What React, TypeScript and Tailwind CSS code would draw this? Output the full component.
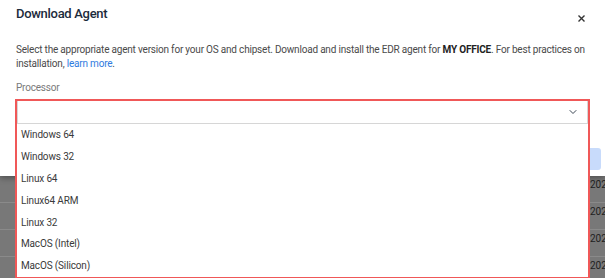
import { ChevronDown } from "lucide-react";

const options = [
  "Windows 64",
  "Windows 32",
  "Linux 64",
  "Linux64 ARM",
  "Linux 32",
  "MacOS (Intel)",
  "MacOS (Silicon)",
];

export default function App() {
  return (
    <div
      className="w-[605px] h-[278px] overflow-hidden bg-[#787878] flex flex-col"
      style={{ fontFamily: "Roboto, 'Liberation Sans', sans-serif" }}
    >
      {/* Modal */}
      <div className="relative z-10 h-[176px] shrink-0 bg-white shadow-[0_2px_6px_rgba(0,0,0,0.35)]">
        <div className="pl-4 pr-[15px]">
          {/* Header */}
          <div className="flex items-start justify-between pt-[6px]">
            <h2 className="text-[13px] leading-[16px] font-medium tracking-[-0.3px] text-[#1c2b3c]">
              Download Agent
            </h2>
            <button className="mt-[9px] mr-[5px] text-[#333]">
              <svg width="7" height="7" viewBox="0 0 7 7">
                <path d="M0.5 0.5 L6.5 6.5 M6.5 0.5 L0.5 6.5" stroke="currentColor" strokeWidth="1.4" />
              </svg>
            </button>
          </div>

          {/* Description */}
          <p className="mt-[21px] text-[10px] leading-[14px] text-[#4a4a4a] tracking-[-0.2px]">
            Select the appropriate agent version for your OS and chipset. Download and install the EDR agent for{" "}
            <span className="font-bold text-[#222]">MY OFFICE</span>. For best practices on installation,{" "}
            <a className="text-[#2f7be0]">learn more</a>.
          </p>

          {/* Processor select */}
          <div className="mt-[11px] text-[10px] leading-[12px] text-[#7a7a7a] tracking-[-0.2px]">Processor</div>
          <div className="relative mt-[5px] -ml-px border-x-2 border-t-2 border-[#f05858]">
            <div className="h-[23px] flex items-center justify-end border border-[#d6d6d6] border-t-0 pr-[8px]">
              <ChevronDown className="w-[12px] h-[12px] text-[#3b4654]" strokeWidth={2} />
            </div>
            <ul className="absolute top-full -left-[2px] -right-[2px] bg-white border-x-2 border-b-2 border-[#f05858]">
              {options.map((o) => (
                <li
                  key={o}
                  className="h-[21.8px] flex items-center pl-[4px] text-[10px] tracking-[-0.15px] text-[#3a3a3a]"
                >
                  {o}
                </li>
              ))}
            </ul>
          </div>
        </div>

        {/* Footer button, mostly hidden by the open menu */}
        <div className="flex justify-end pr-[4px] mt-[24px]">
          <div className="w-[80px] h-[22px] rounded-[3px] bg-[#c8dbfb]" />
        </div>
      </div>

      {/* Page behind the overlay */}
      <div className="flex flex-col">
        {[0, 1, 2, 3].map((i) => (
          <div
            key={i}
            className="h-[27px] grid grid-cols-[590px_1fr] border-b border-[#8a8a8a] pt-[3px] text-[10px] leading-[12px] text-[#1f1f1f]"
          >
            <span />
            <span className="whitespace-nowrap">2024</span>
          </div>
        ))}
      </div>
    </div>
  );
}
